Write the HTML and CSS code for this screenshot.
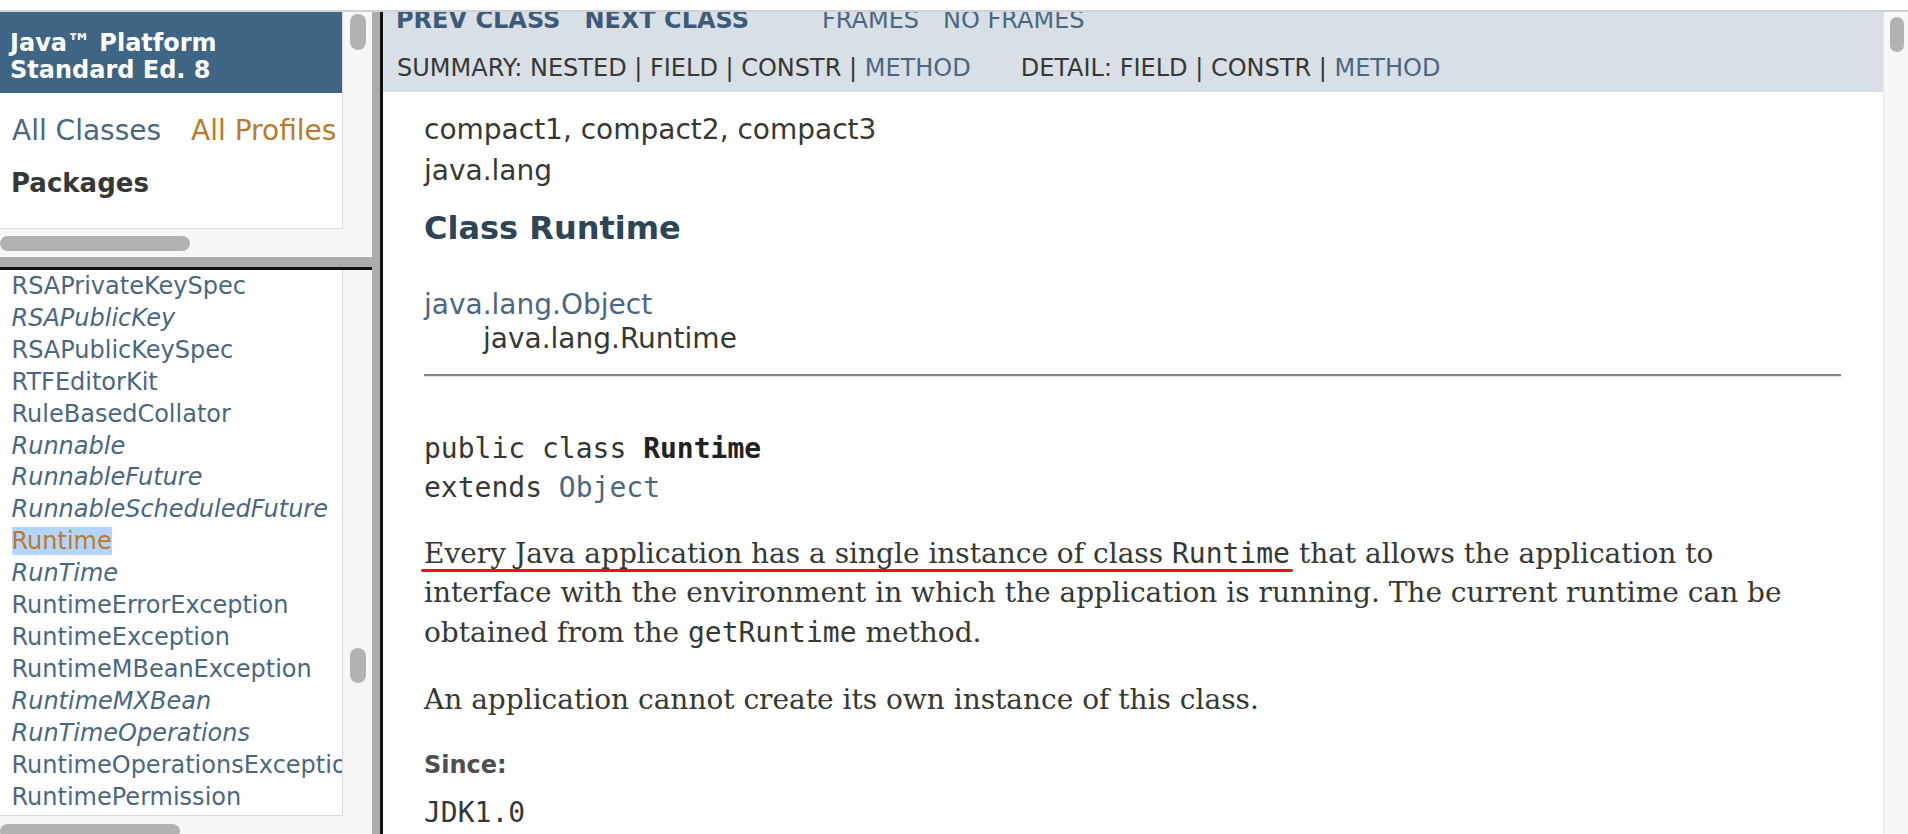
FILE: index.html
```html
<!DOCTYPE html>
<html lang="en">
<head>
  <meta charset="UTF-8">
  <title>Runtime (Java Platform SE 8)</title>
  <link rel="stylesheet" href="styles.css">
</head>
<body>

<div class="topbar"></div>

<div class="frames">
  <div class="side">
    <section class="frame frame-packages">
      <div class="pane">
        <h1 class="bar">Java™ Platform<br>Standard Ed. 8</h1>
        <div class="index-links">
          <a class="link">All Classes</a>
          <a class="link visited">All Profiles</a>
        </div>
        <h2 class="index-title">Packages</h2>
      </div>
      <div class="vtrack"><span class="thumb thumb-packages-v"></span></div>
      <div class="htrack"><span class="thumb thumb-packages-h"></span></div>
      <div class="corner"></div>
    </section>

    <div class="hsplit"></div>

    <section class="frame frame-classes">
      <div class="pane">
        <ul class="class-list">
          <li><a class="link">RSAPrivateKeySpec</a></li>
          <li><a class="link iface">RSAPublicKey</a></li>
          <li><a class="link">RSAPublicKeySpec</a></li>
          <li><a class="link">RTFEditorKit</a></li>
          <li><a class="link">RuleBasedCollator</a></li>
          <li><a class="link iface">Runnable</a></li>
          <li><a class="link iface">RunnableFuture</a></li>
          <li><a class="link iface">RunnableScheduledFuture</a></li>
          <li><a class="link visited selected">Runtime</a></li>
          <li><a class="link iface">RunTime</a></li>
          <li><a class="link">RuntimeErrorException</a></li>
          <li><a class="link">RuntimeException</a></li>
          <li><a class="link">RuntimeMBeanException</a></li>
          <li><a class="link iface">RuntimeMXBean</a></li>
          <li><a class="link iface">RunTimeOperations</a></li>
          <li><a class="link">RuntimeOperationsException</a></li>
          <li><a class="link">RuntimePermission</a></li>
        </ul>
      </div>
      <div class="vtrack"><span class="thumb thumb-classes-v"></span></div>
      <div class="htrack"><span class="thumb thumb-classes-h"></span></div>
      <div class="corner"></div>
    </section>
  </div>

  <div class="vsplit"></div>

  <section class="frame frame-main">
    <div class="pane main-pane">
      <div class="nav">
        <div class="nav-row nav-top">
          <ul class="nav-list">
            <li><a class="nav-strong">PREV CLASS</a></li>
            <li><a class="nav-strong">NEXT CLASS</a></li>
          </ul>
          <ul class="nav-list nav-frames">
            <li><a class="link">FRAMES</a></li>
            <li><a class="link">NO FRAMES</a></li>
          </ul>
        </div>
        <div class="nav-row nav-sub">
          <div class="sub-list">SUMMARY:&nbsp;NESTED&nbsp;|&nbsp;FIELD&nbsp;|&nbsp;CONSTR&nbsp;|&nbsp;<a class="link">METHOD</a></div>
          <div class="sub-list">DETAIL:&nbsp;FIELD&nbsp;|&nbsp;CONSTR&nbsp;|&nbsp;<a class="link">METHOD</a></div>
        </div>
      </div>

      <div class="header">
        <div class="sub-title">compact1, compact2, compact3</div>
        <div class="sub-title">java.lang</div>
        <h2 class="title">Class Runtime</h2>
      </div>

      <div class="content">
        <ul class="inheritance">
          <li><a class="link">java.lang.Object</a></li>
          <li class="inherit-child">java.lang.Runtime</li>
        </ul>
        <hr class="rule">
        <pre class="signature">public class <b>Runtime</b>
extends <a class="link">Object</a></pre>
        <div class="block"><span class="mark">Every Java application has a single instance of class <code>Runtime</code></span> that allows the application to interface with the environment in which the application is running. The current runtime can be obtained from the <code>getRuntime</code> method.</div>
        <div class="block block-next">An application cannot create its own instance of this class.</div>
        <dl class="since">
          <dt>Since:</dt>
          <dd>JDK1.0</dd>
        </dl>
      </div>
    </div>
    <div class="vtrack vtrack-main"><span class="thumb thumb-main-v"></span></div>
  </section>
</div>

</body>
</html>
```

FILE: styles.css
```css
body {
  margin: 0;
  height: 834px;
  overflow: hidden;
  background: #fff;
  color: #353833;
  font-family: "DejaVu Sans", Arial, sans-serif;
}

.topbar {
  height: 10px;
  border-bottom: 2px solid #d2d2d2;
}

.frames {
  display: flex;
  height: 822px;
  overflow: hidden;
}

.side {
  display: flex;
  flex-direction: column;
  flex: none;
  width: 372px;
}

.vsplit {
  flex: none;
  width: 8px;
  background: #acacac;
  border-right: 3px solid #111;
}

.hsplit {
  flex: none;
  height: 10px;
  background: #acacac;
  border-bottom: 3px solid #111;
}

/* a frame = page pane + its scroll bars */
.frame {
  display: grid;
  grid-template-columns: 1fr 29px;
  overflow: hidden;
}

.frame-packages {
  flex: none;
  height: 245px;
  grid-template-rows: 217px 28px;
}

.frame-classes {
  flex: 1;
  grid-template-rows: 546px 1fr;
}

.frame-main {
  flex: 1;
  grid-template-columns: 1fr 25px;
}

.pane {
  overflow: hidden;
  background: #fff;
  border-right: 1px solid #dcdcdc;
  border-bottom: 1px solid #dcdcdc;
}

.main-pane {
  border: none;
}

.vtrack, .htrack, .corner {
  overflow: hidden;
  background: #f7f7f7;
}

.vtrack-main {
  border-left: 1px solid #e6e6e6;
}

.thumb {
  display: block;
  background: #b2b2b2;
  border-radius: 8px;
}

.thumb-packages-v { width: 16px; height: 36px; margin: 2px 0 0 7px; }
.thumb-packages-h { width: 190px; height: 15px; margin-top: 7px; }
.thumb-classes-v  { width: 16px; height: 35px; margin: 378px 0 0 7px; }
.thumb-classes-h  { width: 180px; height: 15px; margin-top: 8px; }
.thumb-main-v     { width: 14px; height: 35px; margin: 5px 0 0 6px; }

.link {
  color: #4a6782;
  text-decoration: none;
}

.visited {
  color: #bb7a2a;
}

/* left frames */
.bar {
  margin: 0;
  padding: 18px 10px 9px;
  background: #3f6585;
  color: #fff;
  font-size: 24px;
  line-height: 27px;
  font-weight: bold;
}

.index-links {
  display: flex;
  gap: 30px;
  margin-top: 21px;
  padding-left: 12px;
  font-size: 28px;
  line-height: 34px;
  white-space: nowrap;
}

.index-title {
  margin: 19px 0 0;
  padding-left: 11px;
  font-size: 26px;
  line-height: 32px;
}

.class-list {
  margin: 1px 0 0;
  padding: 0 0 0 11.5px;
  list-style: none;
  font-size: 24px;
  line-height: 31.9px;
  white-space: nowrap;
}

.iface {
  font-style: italic;
}

.selected {
  background: #b4d5fd;
}

/* main frame */
.nav {
  height: 80px;
  overflow: hidden;
  background: #d9dfe6;
  font-size: 24px;
  line-height: 30px;
  white-space: nowrap;
}

.nav-row {
  display: flex;
}

.nav-top {
  margin-top: -7px;
}

.nav-sub {
  margin-top: 18px;
  padding-left: 14px;
  gap: 50px;
}

.nav-list {
  display: flex;
  margin: 0;
  padding: 0 0 0 1px;
  list-style: none;
}

.nav-list li {
  padding: 0 12px;
}

.nav-frames {
  margin-left: 48px;
}

.nav-strong {
  color: #3d5b78;
  font-weight: bold;
}

.header {
  padding: 17px 0 0 41px;
}

.sub-title {
  font-size: 28px;
  line-height: 41px;
}

.title {
  margin: 17px 0 0;
  color: #2c4557;
  font-size: 32px;
  line-height: 40px;
}

.content {
  padding: 0 42px 0 41px;
}

.inheritance {
  margin: 40px 0 0;
  padding: 0;
  list-style: none;
  font-size: 28px;
  line-height: 34px;
}

.inherit-child {
  padding-left: 59px;
}

.rule {
  margin: 18px 0 0;
  border: none;
  border-top: 2px solid #878787;
  border-bottom: 1px solid #e4e4e4;
}

.signature {
  margin: 52px 0 0;
  font-family: "DejaVu Sans Mono", "Liberation Mono", monospace;
  font-size: 28px;
  line-height: 39.3px;
}

.signature b {
  color: #222;
}

.block {
  margin-top: 26px;
  font-family: "DejaVu Serif", Georgia, serif;
  font-size: 28px;
  line-height: 39.5px;
}

.block code {
  font-family: "DejaVu Sans Mono", monospace;
  font-size: 28px;
}

.block-next {
  margin-top: 28px;
}

.mark {
  position: relative;
}

.mark::after {
  content: "";
  position: absolute;
  left: -3px;
  right: -3px;
  top: 100%;
  margin-top: -1px;
  height: 3px;
  border-radius: 2px;
  background: #e8131e;
}

.since {
  margin: 30px 0 0;
}

.since dt {
  font-size: 24px;
  line-height: 30px;
  font-weight: bold;
  color: #4e4e4e;
}

.since dd {
  margin: 13px 0 0;
  font-family: "DejaVu Sans Mono", monospace;
  font-size: 28px;
  line-height: 39.5px;
}
```
